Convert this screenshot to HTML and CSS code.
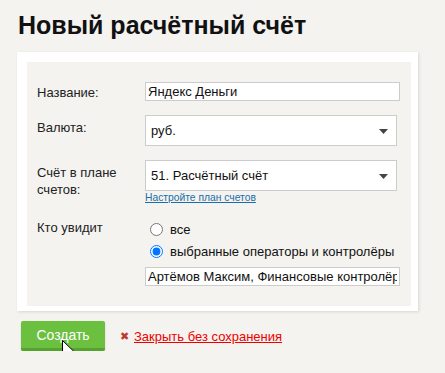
FILE: index.html
```html
<!DOCTYPE html>
<html>
<head>
  <meta charset="UTF-8">
  <title>Новый расчётный счёт</title>
  <link rel="stylesheet" href="styles.css">
</head>
<body>
  <h1>Новый расчётный счёт</h1>
  <form class="panel">
    <div class="inner">

      <!-- Название -->
      <div class="row">
        <label class="lbl lbl-text" for="name">Название:</label>
        <div class="field">
          <input class="text" type="text" id="name" value="Яндекс Деньги">
        </div>
      </div>

      <!-- Валюта -->
      <div class="row">
        <label class="lbl lbl-select">Валюта:</label>
        <div class="field">
          <div class="select">
            <span>руб.</span>
            <svg class="arrow" width="9" height="5" viewBox="0 0 9 5"><path d="M0 0h9L4.5 5z" fill="#444"/></svg>
          </div>
        </div>
      </div>

      <!-- Счёт -->
      <div class="row">
        <label class="lbl lbl-select">Счёт в плане счетов:</label>
        <div class="field">
          <div class="select">
            <span>51. Расчётный счёт</span>
            <svg class="arrow" width="9" height="5" viewBox="0 0 9 5"><path d="M0 0h9L4.5 5z" fill="#444"/></svg>
          </div>
          <a class="hint" href="#">Настройте план счетов</a>
        </div>
      </div>

      <!-- Кто увидит -->
      <div class="row row-radio">
        <label class="lbl lbl-radio">Кто увидит</label>
        <div class="field">
          <label class="radio"><input type="radio" name="who"> все</label>
          <label class="radio"><input type="radio" name="who" checked> выбранные операторы и контролёры</label>
          <input class="text people" type="text" value="Артёмов Максим, Финансовые контролёры">
        </div>
      </div>

    </div>
  </form>

  <div class="actions">
    <button type="submit" class="btn">Создать</button>
    <span class="close-x">&#x2716;</span>
    <a class="close" href="#">Закрыть без сохранения</a>
    <svg class="cursor" width="13" height="20" viewBox="0 0 13 20">
      <path d="M0.5 0.5v16l4-4 3 6.5 2.2-1-3-6.3h5.5z" fill="#fff" stroke="#000" stroke-width="1"/>
    </svg>
  </div>
</body>
</html>
```

FILE: styles.css
```css
body { margin: 0; padding: 0 0 0 18px; background: #f4f3ef; font-family: Arial, "Liberation Sans", sans-serif; font-size: 13px; color: #222; }
h1 { margin: 0; padding-top: 11px; font-size: 25px; line-height: 28px; color: #111; }

.panel { margin: 13px 0 0 -1px; width: 384px; background: #fff; border-style: solid; border-color: #fff; border-width: 10px 7px 5px 10px; box-shadow: 1px 1px 3px rgba(0,0,0,0.12); }
.inner { background: #f4f3ef; padding: 20px 10px 20px 10px; }

.row { display: flex; align-items: flex-start; margin-bottom: 14px; }
.row-radio { margin-bottom: 0; margin-top: 4px; }
.lbl { width: 108px; flex: none; line-height: 17px; color: #222; }
.lbl-text { padding-top: 2px; }
.lbl-select { padding-top: 4px; width: 92px; margin-right: 16px; }
.lbl-radio { padding-top: 1px; }
.field { flex: 1; }

.text { box-sizing: border-box; width: 255px; height: 19px; border: 1px solid #ccc; background: #fff; padding: 0 2px; font: 13px Arial, "Liberation Sans", sans-serif; color: #111; margin: 0; }
.select { box-sizing: border-box; width: 252px; height: 31px; border: 1px solid #ccc; background: #fff; display: flex; align-items: center; justify-content: space-between; padding: 0 8px 0 5px; font-size: 13px; color: #111; }
.arrow { margin-top: 1px; }
.hint { display: block; margin-top: 1px; font-size: 10.3px; color: #1a6ea8; line-height: 12px; }

.radio { display: flex; align-items: center; height: 22px; color: #111; }
.radio input { margin: 0 7px 0 5px; width: 13px; height: 13px; }
.people { margin-top: 5px; }

.actions { display: flex; align-items: center; margin-top: 10px; position: relative; }
.btn { width: 84px; height: 30px; border: none; border-bottom: 3px solid #55a22f; border-radius: 2px; background: #6cc040; color: #fff; font: 14px Arial, "Liberation Sans", sans-serif; padding: 0; margin-left: 3px; box-shadow: 0 1px 2px rgba(0,0,0,0.15); }
.close-x { color: #c0392b; font-size: 11px; margin: 0 5px 0 15px; }
.close { color: #e00; font-size: 13px; }
.cursor { position: absolute; left: 44px; top: 19px; }
```
